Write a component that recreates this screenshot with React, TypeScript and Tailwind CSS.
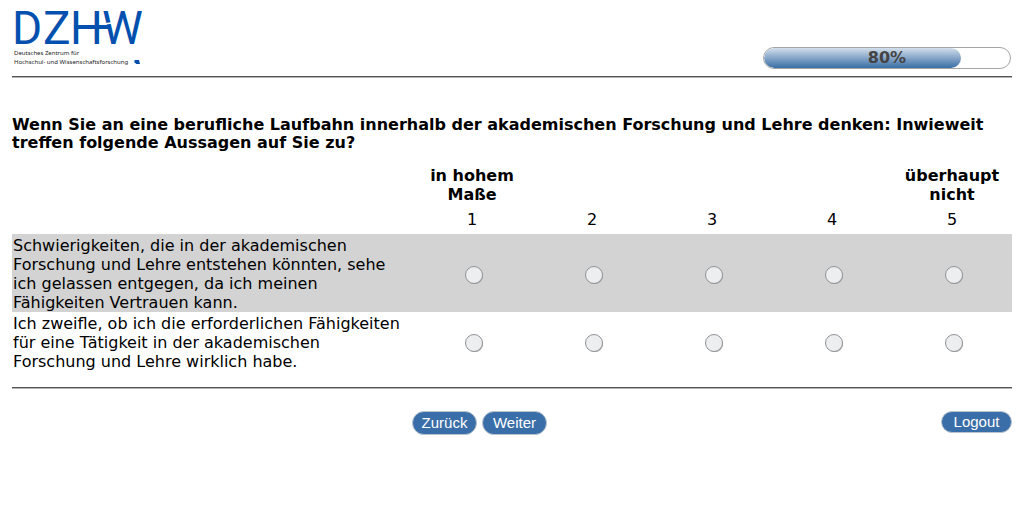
import React from "react";

const scale = [
  { value: 1, label: "in hohem Maße" },
  { value: 2, label: "" },
  { value: 3, label: "" },
  { value: 4, label: "" },
  { value: 5, label: "überhaupt nicht" },
];

const statements = [
  "Schwierigkeiten, die in der akademischen Forschung und Lehre entstehen könnten, sehe ich gelassen entgegen, da ich meinen Fähigkeiten Vertrauen kann.",
  "Ich zweifle, ob ich die erforderlichen Fähigkeiten für eine Tätigkeit in der akademischen Forschung und Lehre wirklich habe.",
];

function Logo() {
  return (
    <svg className="-ml-2 overflow-visible" width="144" height="64" viewBox="4 0 144 64" role="img" aria-label="DZHW">
      <g fill="#0450ae" fontFamily="Roboto, sans-serif" fontSize="46">
        <text x="12" y="39">D</text>
        <text x="43" y="39">Z</text>
        <text x="70" y="39">H</text>
        <text x="102" y="39">W</text>
      </g>
      <path d="M102 19.4 L111 18" stroke="#fff" strokeWidth="1.6" />
      <path d="M74 20 H109.5 V24 H74 Z" fill="#0450ae" />
      <g fill="#222" fontFamily="'Noto Sans', sans-serif" fontSize="6">
        <text x="14" y="50">Deutsches Zentrum für</text>
        <text x="14" y="59">Hochschul- und Wissenschaftsforschung</text>
      </g>
      <path d="M134.5 55 H139 L140 59 H136 L135.5 58 H134.5 Z" fill="#0450ae" />
    </svg>
  );
}

function Rule() {
  return <hr className="h-0.5 border-t border-b border-t-[#555555] border-b-[#b4b4b4]" />;
}

function Progress({ percent }: { percent: number }) {
  return (
    <div
      role="progressbar"
      aria-label="Fortschritt"
      aria-valuenow={percent}
      aria-valuemin={0}
      aria-valuemax={100}
      className="grid h-[22px] w-[248px] overflow-hidden rounded-full border border-[#a5a5a5] text-[16px] leading-5 font-bold text-[#444444]"
    >
      <div
        className="col-start-1 row-start-1 rounded-full bg-linear-to-b from-[#d3dfeb] to-[#3a6ea5]"
        style={{ width: `${percent}%` }}
      />
      <span className="z-10 col-start-1 row-start-1 text-center">{percent}%</span>
    </div>
  );
}

const buttonStyle =
  "cursor-pointer rounded-full border border-[#b9c3cd] bg-[#3a6ea8] px-1 font-['Liberation_Sans',sans-serif] text-[15px] leading-5 text-white";

export default function App() {
  return (
    <main className="px-3 pt-[5px] font-['DejaVu_Sans',sans-serif] text-[16px] leading-[19px] text-black">
      <header className="flex items-end justify-between pb-[7px]">
        <Logo />
        <div className="pr-px">
          <Progress percent={80} />
        </div>
      </header>
      <Rule />
      <form onSubmit={(e) => e.preventDefault()}>
        <h1 id="question" className="mt-[38px] leading-[18px] font-bold">
          Wenn Sie an eine berufliche Laufbahn innerhalb der akademischen Forschung und Lehre denken: Inwieweit
          treffen folgende Aussagen auf Sie zu?
        </h1>
        <table aria-labelledby="question" className="mt-[13px] mb-4 w-full table-fixed border-collapse">
          <colgroup>
            <col className="w-2/5" />
            {scale.map((s) => (
              <col key={s.value} />
            ))}
          </colgroup>
          <thead>
            <tr>
              <td />
              {scale.map((s) => (
                <th key={s.value} className="px-3 py-px align-top font-bold">
                  {s.label}
                </th>
              ))}
            </tr>
            <tr>
              <td />
              {scale.map((s) => (
                <td key={s.value} className="py-[5px] text-center">
                  {s.value}
                </td>
              ))}
            </tr>
          </thead>
          <tbody>
            {statements.map((text, row) => (
              <tr key={row} className="odd:bg-[#d3d3d3]">
                <th scope="row" className="pt-0.5 pr-2 pl-px text-left font-normal">
                  {text}
                </th>
                {scale.map((s) => (
                  <td key={s.value}>
                    <input
                      type="radio"
                      name={`statement-${row}`}
                      value={s.value}
                      aria-label={`${text} ${s.value}`}
                      className="mx-auto mt-[3px] block size-[18px] translate-x-0.5 appearance-none rounded-full border border-[#909396] bg-[#eceef0] shadow-[1px_1px_0_-1px_#aaa] checked:bg-[#3a6ea8]"
                    />
                  </td>
                ))}
              </tr>
            ))}
          </tbody>
        </table>
        <Rule />
        <div className="mt-[22px] grid grid-cols-[2fr_3fr] items-start">
          <div className="col-start-2 flex items-start justify-between">
            <div className="flex gap-[5px]">
              <button type="button" className={`${buttonStyle} h-6 w-[65px]`}>Zurück</button>
              <button type="submit" className={`${buttonStyle} h-6 w-[65px]`}>Weiter</button>
            </div>
            <button type="button" className={`${buttonStyle} h-[22px] w-[71px]`}>
              Logout
            </button>
          </div>
        </div>
      </form>
    </main>
  );
}
